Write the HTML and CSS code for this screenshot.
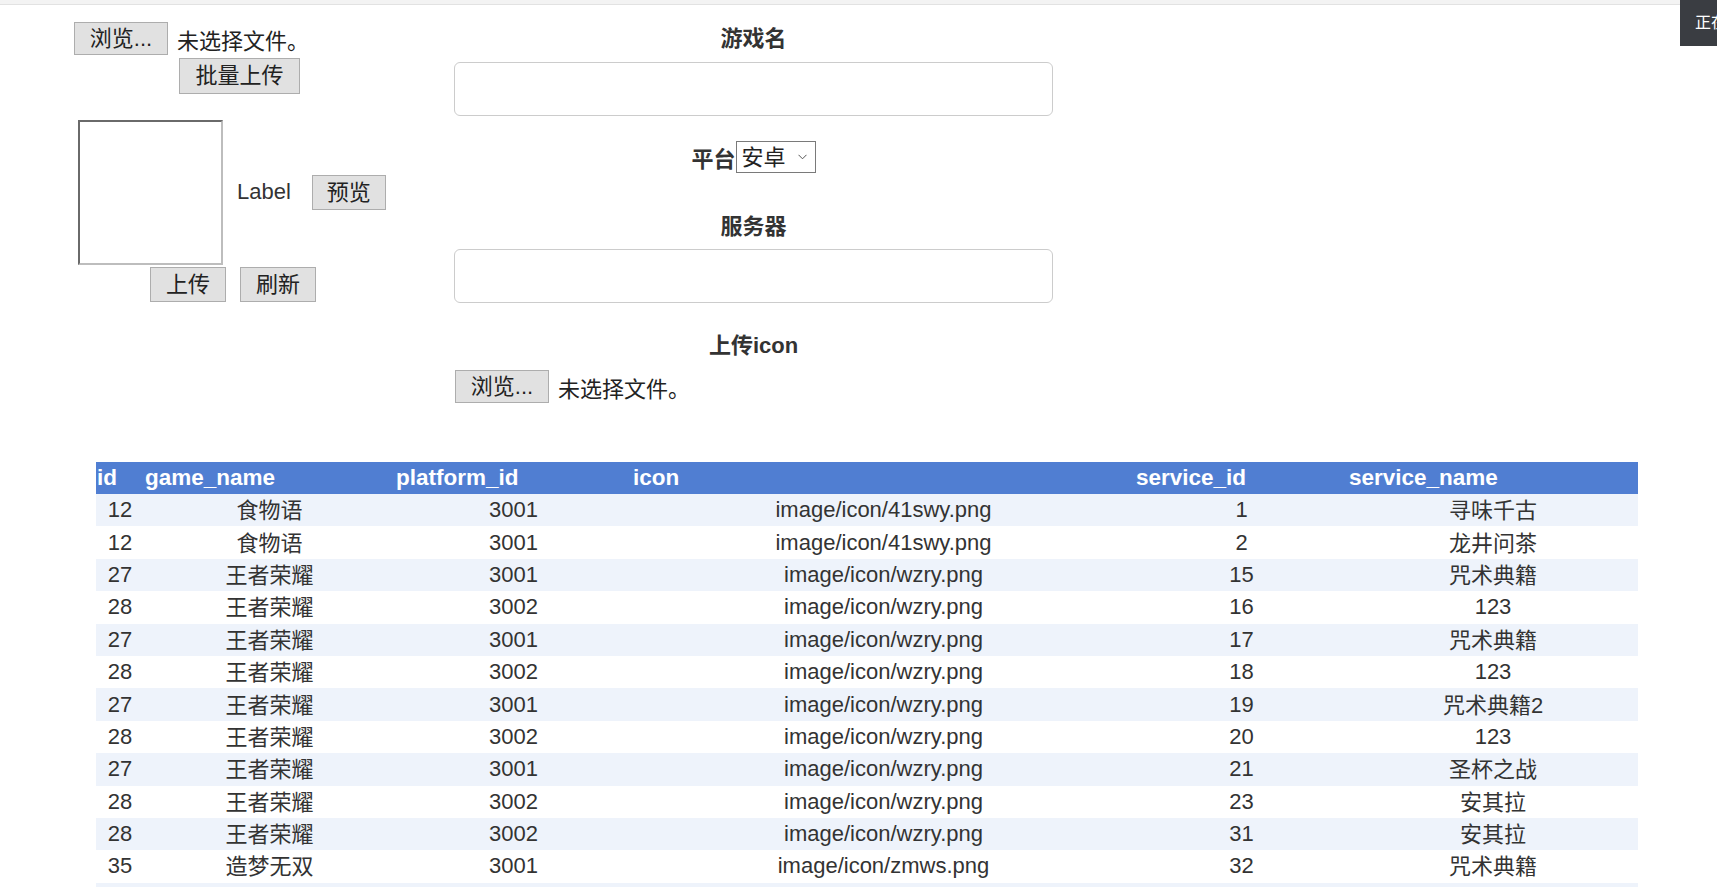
FILE: index.html
```html
<!DOCTYPE html>
<html lang="zh-CN">
<head>
<meta charset="utf-8">
<title>游戏管理</title>
<link rel="stylesheet" href="styles.css">
</head>
<body>
<div class="topband"></div>
<div class="loading">正在加载...</div>
<div class="top">
  <div class="leftcol">
    <div class="row1">
      <button class="btn btn-file">浏览...</button><span class="nofile">未选择文件。</span>
    </div>
    <div class="row2"><button class="btn btn-batch">批量上传</button></div>
    <div class="row3">
      <div class="imgbox"></div>
      <span class="lbl">Label</span>
      <button class="btn btn-small btn-preview">预览</button>
    </div>
    <div class="row4">
      <button class="btn btn-small btn-up">上传</button>
      <button class="btn btn-small btn-refresh">刷新</button>
    </div>
  </div>
  <div class="form">
    <div class="heading heading-game">游戏名</div>
    <input class="field field-first" type="text">
    <div class="platform">
      <span class="plabel">平台</span>
      <span class="selwrap">
        <select class="sel"><option>安卓</option><option>iOS</option></select>
        <svg class="chev" width="9" height="6" viewBox="0 0 9 6"><path d="M0.5 0.8 L4.5 4.8 L8.5 0.8" fill="none" stroke="#555" stroke-width="1"/></svg>
      </span>
    </div>
    <div class="heading heading-server">服务器</div>
    <input class="field field-second" type="text">
    <div class="heading heading-icon">上传icon</div>
    <div class="iconrow">
      <button class="btn btn-file">浏览...</button><span class="nofile">未选择文件。</span>
    </div>
  </div>
</div>

<table class="grid">
  <colgroup>
    <col class="c-id"><col class="c-name"><col class="c-plat"><col class="c-icon"><col class="c-sid"><col class="c-sname">
  </colgroup>
  <thead>
    <tr><th>id</th><th>game_name</th><th>platform_id</th><th>icon</th><th>service_id</th><th>service_name</th></tr>
  </thead>
  <tbody>
    <tr><td>12</td><td><span class="cjk">食物语</span></td><td>3001</td><td>image/icon/41swy.png</td><td>1</td><td><span class="cjk">寻味千古</span></td></tr>
    <tr><td>12</td><td><span class="cjk">食物语</span></td><td>3001</td><td>image/icon/41swy.png</td><td>2</td><td><span class="cjk">龙井问茶</span></td></tr>
    <tr><td>27</td><td><span class="cjk">王者荣耀</span></td><td>3001</td><td>image/icon/wzry.png</td><td>15</td><td><span class="cjk">咒术典籍</span></td></tr>
    <tr><td>28</td><td><span class="cjk">王者荣耀</span></td><td>3002</td><td>image/icon/wzry.png</td><td>16</td><td>123</td></tr>
    <tr><td>27</td><td><span class="cjk">王者荣耀</span></td><td>3001</td><td>image/icon/wzry.png</td><td>17</td><td><span class="cjk">咒术典籍</span></td></tr>
    <tr><td>28</td><td><span class="cjk">王者荣耀</span></td><td>3002</td><td>image/icon/wzry.png</td><td>18</td><td>123</td></tr>
    <tr><td>27</td><td><span class="cjk">王者荣耀</span></td><td>3001</td><td>image/icon/wzry.png</td><td>19</td><td><span class="cjk">咒术典籍2</span></td></tr>
    <tr><td>28</td><td><span class="cjk">王者荣耀</span></td><td>3002</td><td>image/icon/wzry.png</td><td>20</td><td>123</td></tr>
    <tr><td>27</td><td><span class="cjk">王者荣耀</span></td><td>3001</td><td>image/icon/wzry.png</td><td>21</td><td><span class="cjk">圣杯之战</span></td></tr>
    <tr><td>28</td><td><span class="cjk">王者荣耀</span></td><td>3002</td><td>image/icon/wzry.png</td><td>23</td><td><span class="cjk">安其拉</span></td></tr>
    <tr><td>28</td><td><span class="cjk">王者荣耀</span></td><td>3002</td><td>image/icon/wzry.png</td><td>31</td><td><span class="cjk">安其拉</span></td></tr>
    <tr><td>35</td><td><span class="cjk">造梦无双</span></td><td>3001</td><td>image/icon/zmws.png</td><td>32</td><td><span class="cjk">咒术典籍</span></td></tr>
    <tr><td></td><td></td><td></td><td></td><td></td><td></td></tr>
  </tbody>
</table>
</body>
</html>
```

FILE: styles.css
```css
html, body {
  margin: 0;
  padding: 0;
  background: #ffffff;
}
body {
  font-family: "Liberation Sans", "Noto Sans CJK SC", sans-serif;
  font-size: 22px;
  color: #333333;
}
.topband {
  height: 4px;
  background: #f3f3f3;
  border-bottom: 1px solid #e2e2e2;
}
.loading {
  position: fixed;
  top: 0;
  right: 0;
  width: 22px;
  height: 46px;
  padding-left: 15px;
  background: #3a3d42;
  color: #ffffff;
  font-size: 16px;
  line-height: 46px;
  white-space: nowrap;
  overflow: hidden;
}
.top {
  display: flex;
  align-items: flex-start;
  padding-top: 17px;
  padding-left: 74px;
}
.leftcol {
  width: 380px;
  flex: none;
}
.btn {
  font-family: "Liberation Sans", "Noto Sans CJK SC", sans-serif;
  font-size: 22px;
  color: #222222;
  background: #e1e1e1;
  border: 1px solid #adadad;
  border-radius: 0;
  padding: 0;
  margin: 0;
  box-sizing: border-box;
  line-height: 1;
}
.btn-file {
  width: 94px;
  height: 33px;
}
.nofile {
  margin-left: 9px;
  color: #222222;
}
.row1, .iconrow {
  display: flex;
  align-items: center;
  height: 33px;
}
.row2 {
  margin-top: 3px;
  padding-left: 105px;
}
.btn-batch {
  width: 121px;
  height: 36px;
}
.row3 {
  margin-top: 26px;
  display: flex;
  align-items: center;
  padding-left: 4px;
}
.imgbox {
  width: 145px;
  height: 145px;
  box-sizing: border-box;
  border-style: solid;
  border-width: 2px;
  border-color: #6a6a6a #bdbdbd #bdbdbd #6a6a6a;
  background: #ffffff;
}
.lbl {
  margin-left: 14px;
  color: #333333;
  position: relative;
  top: -1px;
}
.btn-small {
  width: 74px;
  height: 35px;
}
.btn-preview {
  margin-left: 21px;
}
.row4 {
  margin-top: 2px;
  display: flex;
  padding-left: 76px;
}
.btn-up, .btn-refresh {
  width: 76px;
}
.btn-refresh {
  margin-left: 14px;
}
.form {
  width: 599px;
  flex: none;
  display: flex;
  flex-direction: column;
}
.heading {
  height: 30px;
  line-height: 30px;
  text-align: center;
  font-weight: bold;
  color: #333333;
}
.heading-game {
  padding-top: 2px;
}
.field {
  display: block;
  width: 599px;
  height: 54px;
  box-sizing: border-box;
  border: 1px solid #cccccc;
  border-radius: 6px;
  margin: 0;
  padding: 0 10px;
  font-size: 22px;
  background: #ffffff;
}
.field-first {
  margin-top: 8px;
}
.platform {
  margin-top: 25px;
  height: 32px;
  display: flex;
  justify-content: center;
  align-items: center;
}
.plabel {
  font-weight: bold;
  color: #333333;
}
.selwrap {
  position: relative;
  display: inline-block;
  height: 32px;
}
.sel {
  -webkit-appearance: none;
  appearance: none;
  width: 80px;
  height: 32px;
  box-sizing: border-box;
  border: 1px solid #7a7a7a;
  border-radius: 0;
  background: #ffffff;
  color: #222222;
  font-family: "Liberation Sans", "Noto Sans CJK SC", sans-serif;
  font-size: 22px;
  padding: 0 0 0 5px;
  margin: 0;
  outline: none;
}
.chev {
  position: absolute;
  right: 9px;
  top: 13px;
  pointer-events: none;
}
.heading-server {
  margin-top: 39px;
}
.field-second {
  margin-top: 7px;
}
.heading-icon {
  margin-top: 28px;
}
.iconrow {
  margin-top: 9px;
  padding-left: 1px;
}
.grid {
  margin-top: 59px;
  margin-left: 96px;
  width: 1542px;
  table-layout: fixed;
  border-collapse: collapse;
  border-spacing: 0;
}
.c-id { width: 48px; }
.c-name { width: 251px; }
.c-plat { width: 237px; }
.c-icon { width: 503px; }
.c-sid { width: 213px; }
.c-sname { width: 290px; }
.grid th {
  height: 32px;
  background: #507ed2;
  color: #ffffff;
  font-weight: bold;
  font-size: 22.5px;
  text-align: left;
  padding: 0 0 0 1px;
  white-space: nowrap;
}
.grid td {
  height: 32.4px;
  padding: 0;
  text-align: center;
  color: #333333;
  font-size: 22px;
  white-space: nowrap;
}
.cjk {
  position: relative;
  top: -2px;
}
.grid tbody tr:nth-child(odd) td {
  background: #eef3fb;
}
```
